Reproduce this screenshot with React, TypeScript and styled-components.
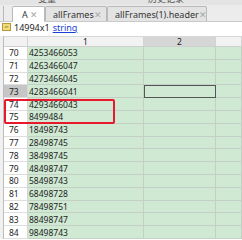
import React from 'react'
import styled, { createGlobalStyle } from 'styled-components'

const GlobalStyle = createGlobalStyle`
  html, body {
    margin: 0;
    padding: 0;
    background: #ffffff;
  }
  body {
    font-family: 'Noto Sans', 'Noto Sans CJK SC', sans-serif;
    color: #1e1e1e;
  }
`

const ROW_H = 12.8
const COLS = { strip: 4, num: 24, c1: 116, c2: 72 }

const Window = styled.div`
  position: relative;
  width: 242px;
  height: 240px;
  overflow: hidden;
  background: #ffffff;
`

const TopStrip = styled.div`
  position: relative;
  height: 5px;
  background: #e4e4e4;
  overflow: hidden;
  display: flex;
`

const StripLabel = styled.span<{ $left: number }>`
  margin-left: ${(p) => p.$left}px;
  margin-top: -6px;
  font-size: 9px;
  line-height: 10px;
  color: #555;
  white-space: nowrap;
`

const TabBar = styled.div`
  display: flex;
  align-items: flex-end;
  height: 17px;
  background: #ececec;
  border-bottom: 1px solid #c9c9c9;
  box-sizing: border-box;
  padding-left: 3px;
`

const TabStub = styled.div`
  width: 9px;
  height: 15px;
  border-left: 1px solid #b9b9b9;
  box-sizing: border-box;
`

const Tab = styled.div<{ $active?: boolean; $width: number }>`
  display: flex;
  align-items: center;
  justify-content: space-between;
  width: ${(p) => p.$width}px;
  height: ${(p) => (p.$active ? 16 : 15)}px;
  padding: 0 6px 0 ${(p) => (p.$active ? 9 : 7)}px;
  box-sizing: border-box;
  background: ${(p) => (p.$active ? '#ffffff' : '#e3e3e3')};
  border: 1px solid #b9b9b9;
  border-bottom: ${(p) => (p.$active ? '1px solid #ffffff' : 'none')};
  border-radius: 2px 2px 0 0;
  margin-bottom: ${(p) => (p.$active ? -1 : 0)}px;
  font-size: 9px;
  color: #333;
  white-space: nowrap;
`

const Close = styled.span`
  color: #a8a8a8;
  font-size: 9px;
`

const InfoRow = styled.div`
  display: flex;
  align-items: center;
  gap: 3px;
  height: 10px;
  padding-left: 2px;
  font-size: 9px;
`

const TypeIcon = styled.div`
  width: 9px;
  height: 8px;
  background: #f3dc7a;
  border: 1px solid #b59a3a;
  box-sizing: border-box;
  font-size: 3px;
  line-height: 6px;
  color: #6b5a10;
  text-align: center;
  overflow: hidden;
`

const Link = styled.span`
  color: #1a3fd6;
  text-decoration: underline;
`

const Grid = styled.div`
  margin-top: 4px;
  display: flex;
  flex-direction: column;
`

const Row = styled.div<{ $h: number }>`
  display: flex;
  height: ${(p) => p.$h}px;
`

const Strip = styled.div`
  width: ${COLS.strip}px;
  flex: none;
  background: #f0f0f0;
  border-right: 1px solid #bdbdbd;
  box-sizing: border-box;
`

const HeadCell = styled.div<{ $w?: number; $dark?: boolean }>`
  ${(p) => (p.$w ? `width: ${p.$w}px; flex: none;` : 'flex: 1;')}
  box-sizing: border-box;
  background: ${(p) => (p.$dark ? '#d6d6d6' : '#f2f2f2')};
  border-top: 1px solid #d8d8d8;
  border-right: 1px solid #d3d3d3;
  border-bottom: 1px solid #cfcfcf;
  display: flex;
  align-items: center;
  justify-content: center;
  font-size: 8.5px;
`

const NumCell = styled.div<{ $sel?: boolean }>`
  width: ${COLS.num}px;
  flex: none;
  box-sizing: border-box;
  background: ${(p) => (p.$sel ? '#c6c6c6' : '#ffffff')};
  border-right: 1px solid #d6d6d6;
  border-bottom: 1px solid #dedede;
  display: flex;
  align-items: center;
  padding-left: 5px;
  font-size: 8.5px;
`

const DataCell = styled.div<{ $w?: number; $sel?: boolean }>`
  ${(p) => (p.$w ? `width: ${p.$w}px; flex: none;` : 'flex: 1;')}
  box-sizing: border-box;
  background: #d0e9d3;
  border-right: 1px solid #c4cfc5;
  border-bottom: 1px solid #c4cfc5;
  ${(p) => (p.$sel ? 'outline: 1.5px solid #555; outline-offset: -1.5px;' : '')}
  display: flex;
  align-items: center;
  padding-left: 1px;
  font-size: 8.5px;
`

const Highlight = styled.div`
  position: absolute;
  left: 4px;
  top: 99px;
  width: 111px;
  height: 25px;
  border: 2px solid #e8192c;
  border-radius: 2px;
  box-sizing: border-box;
`

const values = [
  '4253466053',
  '4263466047',
  '4273466045',
  '4283466041',
  '4293466043',
  '8499484',
  '18498743',
  '28498745',
  '38498745',
  '48498747',
  '58498743',
  '68498728',
  '78498751',
  '88498747',
  '98498743',
]

export default function App() {
  return (
    <Window>
      <GlobalStyle />
      <TopStrip>
        <StripLabel $left={38}>变量</StripLabel>
        <StripLabel $left={92}>历史记录</StripLabel>
      </TopStrip>
      <TabBar>
        <TabStub />
        <Tab $active $width={33}>
          A<Close>✕</Close>
        </Tab>
        <Tab $width={62}>
          allFrames<Close>✕</Close>
        </Tab>
        <Tab $width={100}>
          allFrames(1).header<Close>✕</Close>
        </Tab>
      </TabBar>
      <InfoRow>
        <TypeIcon>str</TypeIcon>
        <span>14994x1</span>
        <Link>string</Link>
      </InfoRow>
      <Grid>
        <Row $h={11}>
          <Strip />
          <HeadCell $w={COLS.num} />
          <HeadCell $w={COLS.c1}>1</HeadCell>
          <HeadCell $w={COLS.c2} $dark>
            2
          </HeadCell>
          <HeadCell />
        </Row>
        {values.map((v, i) => {
          const n = 70 + i
          const sel = n === 73
          return (
            <Row key={n} $h={ROW_H}>
              <Strip />
              <NumCell $sel={sel}>{n}</NumCell>
              <DataCell $w={COLS.c1}>{v}</DataCell>
              <DataCell $w={COLS.c2} $sel={sel} />
              <DataCell />
            </Row>
          )
        })}
      </Grid>
      <Highlight />
    </Window>
  )
}
